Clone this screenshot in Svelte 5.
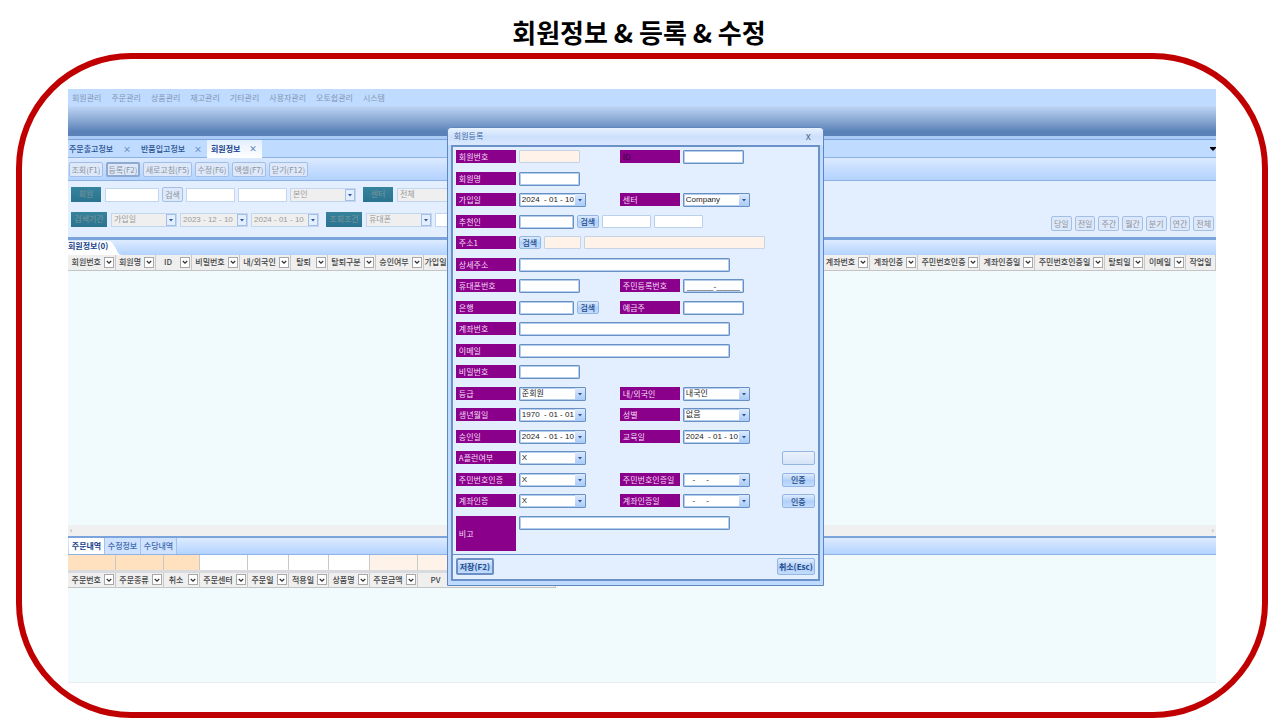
<script>
  const menus = ['회원관리', '주문관리', '상품관리', '재고관리', '기타관리', '사용자관리', '오토쉽관리', '시스템'];
  const tabs = [
    { name: '주문출고정보', active: false },
    { name: '반품입고정보', active: false },
    { name: '회원정보', active: true }
  ];
  const tools = [
    { name: '조회(F1)', w: 34 },
    { name: '등록(F2)', w: 34 },
    { name: '새로고침(F5)', w: 49 },
    { name: '수정(F6)', w: 34 },
    { name: '엑셀(F7)', w: 34 },
    { name: '닫기(F12)', w: 39 }
  ];
  const ranges = ['당일', '전일', '주간', '월간', '분기', '연간', '전체'];
  const memberColumns = [
    { name: '회원번호', w: 47 },
    { name: '회원명', w: 40 },
    { name: 'ID', w: 36 },
    { name: '비밀번호', w: 48 },
    { name: '내/외국인', w: 51 },
    { name: '탈퇴', w: 37 },
    { name: '탈퇴구분', w: 48 },
    { name: '승인여부', w: 48 },
    { name: '가입일', w: 0 },
    { name: '계좌번호', w: 48 },
    { name: '계좌인증', w: 48 },
    { name: '주민번호인증', w: 62 },
    { name: '계좌인증일', w: 55 },
    { name: '주민번호인증일', w: 70 },
    { name: '탈퇴일', w: 40 },
    { name: '이메일', w: 41 },
    { name: '작업일', w: 30, plain: true }
  ];
  const orderColumns = [
    { name: '주문번호', w: 47, tone: 'peach' },
    { name: '주문종류', w: 48, tone: 'peach' },
    { name: '취소', w: 36, tone: 'peach' },
    { name: '주문센터', w: 48, tone: 'white' },
    { name: '주문일', w: 41, tone: 'white' },
    { name: '적용일', w: 40, tone: 'white' },
    { name: '상품명', w: 41, tone: 'white' },
    { name: '주문금액', w: 48, tone: 'cream' },
    { name: 'PV', w: 138, tone: 'cream' }
  ];
  const rows = [
    [{ label: '회원번호', type: 'text', tone: 'off' }, { label: 'ID', type: 'text', dark: true }],
    [{ label: '회원명', type: 'text' }],
    [{ label: '가입일', type: 'date', value: '2024  - 01 - 10' }, { label: '센터', type: 'select', value: 'Company' }],
    [{ label: '추천인', type: 'referrer' }],
    [{ label: '주소1', type: 'address' }],
    [{ label: '상세주소', type: 'wide' }],
    [{ label: '휴대폰번호', type: 'text' }, { label: '주민등록번호', type: 'text', value: '______-_______' }],
    [{ label: '은행', type: 'search' }, { label: '예금주', type: 'text' }],
    [{ label: '계좌번호', type: 'wide' }],
    [{ label: '이메일', type: 'wide' }],
    [{ label: '비밀번호', type: 'text' }],
    [{ label: '등급', type: 'select', value: '준회원' }, { label: '내/외국인', type: 'select', value: '내국인' }],
    [{ label: '생년월일', type: 'date', value: '1970  - 01 - 01' }, { label: '성별', type: 'select', value: '없음' }],
    [{ label: '승인일', type: 'date', value: '2024  - 01 - 10' }, { label: '교육일', type: 'date', value: '2024  - 01 - 10' }],
    [{ label: 'A플런여부', type: 'select', value: 'X' }],
    [{ label: '주민번호인증', type: 'select', value: 'X' }, { label: '주민번호인증일', type: 'date', value: '   -     -' }],
    [{ label: '계좌인증', type: 'select', value: 'X' }, { label: '계좌인증일', type: 'date', value: '   -     -' }],
    [{ label: '비고', type: 'wide' }]
  ];
  const actions = { 14: '', 15: '인증', 16: '인증' };
</script>

{#snippet arrow()}
  <svg class="arrow" viewBox="0 0 6 4" width="6" height="4" aria-hidden="true"><path d="M1 1h4L3 3.4z" /></svg>
{/snippet}

{#snippet filterBox()}
  <button class="drop" aria-label="필터"><svg viewBox="0 0 8 8" width="8" height="8" aria-hidden="true"><path d="M1.800 3l2.200 2.200L6.200 3" /></svg></button>
{/snippet}

{#snippet combo(id, value, label)}
  <span class="combo">
    <select {id} aria-label={label}><option>{value}</option></select>
    <span class="knob">{@render arrow()}</span>
  </span>
{/snippet}

{#snippet datebox(id, value, label)}
  <span class="combo date">
    <input {id} {value} aria-label={label} />
    <button class="knob" aria-label="달력">{@render arrow()}</button>
  </span>
{/snippet}

<main>
  <h1>회원정보 &amp; 등록 &amp; 수정</h1>
  <div class="frame">
    <div class="app">
      <nav class="menu">
        {#each menus as m}<a href="#menu">{m}</a>{/each}
      </nav>
      <div class="banner"></div>
      <div class="tabs">
        {#each tabs as t}
          <div class="tab" class:active={t.active}><span>{t.name}</span><button aria-label="탭 닫기">×</button></div>
        {/each}
        <svg class="more" viewBox="0 0 6 4" width="6" height="4" aria-hidden="true"><path d="M0 0h6v1L3 4 0 1z" /></svg>
      </div>
      <div class="tools">
        {#each tools as t, i}<button class="ghost" class:focus={i === 1} style:width="{t.w}px">{t.name}</button>{/each}
      </div>
      <div class="filters">
        <div class="line">
          <label class="tag short" for="f-member">회원</label>
          <input id="f-member" class="w54" />
          <button class="ghost find">검색</button>
          <input class="w49" aria-label="회원 이름" />
          <input class="w49" aria-label="회원 연락처" />
          {@render combo('f-self', '본인', '관계')}
          <label class="tag short next" for="f-center">센터</label>
          {@render combo('f-center', '전체', '센터')}
        </div>
        <div class="line">
          <label class="tag" for="f-period">검색기간</label>
          {@render combo('f-period', '가입일', '검색기간')}
          {@render datebox('f-from', '2023 - 12 - 10', '시작일')}
          {@render datebox('f-to', '2024 - 01 - 10', '종료일')}
          <label class="tag next" for="f-cond">조회조건</label>
          {@render combo('f-cond', '휴대폰', '조회조건')}
          <input class="w54" aria-label="조회값" />
        </div>
        <div class="ranges">
          {#each ranges as r}<button class="ghost">{r}</button>{/each}
        </div>
      </div>
      <div class="gridtabs">
        <div class="slant">
          <svg viewBox="0 0 54 15" width="54" height="15" aria-hidden="true"><path d="M0 1h40c4 0 5 3 7 6s3 8 7 8H0z" /></svg>
          <strong>회원정보(0)</strong>
        </div>
      </div>
      <table class="member">
        <colgroup>
          {#each memberColumns as c}<col style:width={c.w ? `${c.w}px` : 'auto'} />{/each}
        </colgroup>
        <thead>
          <tr>
            {#each memberColumns as c}
              <th><div class="cell" class:start={!c.w}><span>{c.name}</span>{#if !c.plain}{@render filterBox()}{/if}</div></th>
            {/each}
          </tr>
        </thead>
      </table>
      <div class="empty"></div>
      <div class="scroll"><span>‹</span><span>›</span></div>
      <div class="subtabs">
        <button class="on">주문내역</button><button>수정정보</button><button>수당내역</button>
      </div>
      <div class="orders">
        <table>
          <colgroup>
            {#each orderColumns as c}<col style:width="{c.w}px" />{/each}
          </colgroup>
          <tbody>
            <tr class="sum">{#each orderColumns as c}<td class={c.tone}></td>{/each}</tr>
          </tbody>
          <tbody>
            <tr>
              {#each orderColumns as c}
                <th><div class="cell" class:pv={c.name === 'PV'}><span>{c.name}</span>{#if c.name !== 'PV'}{@render filterBox()}{/if}</div></th>
              {/each}
            </tr>
          </tbody>
        </table>
      </div>

      <div class="dialog" role="dialog" aria-label="회원등록">
        <header><span>회원등록</span><button aria-label="닫기">x</button></header>
        <div class="body">
          <form onsubmit={(e) => e.preventDefault()}>
            {#each rows as row, i}
              <div class="row" class:note={i === 17}>
                {#each row as f, j}
                  {@const id = `m-${i}-${j}`}
                  <label for={id} class:dark={f.dark}>{f.label}</label>
                  <div class="field" class:span={row.length === 1}>
                    {#if f.type === 'date'}
                      {@render datebox(id, f.value, f.label)}
                    {:else if f.type === 'select'}
                      {@render combo(id, f.value, f.label)}
                    {:else if f.type === 'address'}
                      <button class="blue">검색</button>
                      <input {id} class="off w36" />
                      <input class="off w180" aria-label="주소" />
                    {:else if f.type === 'referrer'}
                      <input {id} class="w55" />
                      <button class="blue">검색</button>
                      <input class="pale" aria-label="추천인 번호" />
                      <input class="pale" aria-label="추천인 이름" />
                    {:else if f.type === 'search'}
                      <input {id} class="w55" />
                      <button class="blue">검색</button>
                    {:else}
                      <input {id} class={f.tone ?? ''} class:w211={f.type === 'wide'} value={f.value ?? ''} />
                    {/if}
                    {#if i in actions && j === row.length - 1}
                      <button class="blue auth" class:blank={!actions[i]} aria-label={actions[i] || '여부'}>{actions[i]}</button>
                    {/if}
                  </div>
                {/each}
              </div>
            {/each}
          </form>
          <footer>
            <button class="blue save">저장(F2)</button>
            <button class="blue">취소(Esc)</button>
          </footer>
        </div>
      </div>
    </div>
  </div>
</main>

<style>
  :global(body) { margin: 0; background: #fff; }
  main, main * { box-sizing: border-box; }
  main {
    min-height: 100vh;
    display: flex;
    flex-direction: column;
    padding: 0 12px 2px 16px;
    font-family: 'Noto Sans CJK KR', 'Liberation Sans', sans-serif;
    font-size: 8px;
    line-height: 12px;
    color: #333;
  }
  button, input, select { font: inherit; color: inherit; margin: 0; padding: 0; border: 0; background: none; border-radius: 0; min-width: 0; }
  h1 { margin: 0; height: 53px; padding: 14px 6px 0 0; font-size: 26px; line-height: 36px; text-align: center; color: #000; }
  .frame {
    flex: 1;
    display: flex;
    border: 6px solid #c00000;
    border-radius: 115px;
    padding: 30px 46px 29px;
  }
  .app { position: relative; flex: 1; min-width: 0; display: flex; flex-direction: column; background: #f1fafd; border-bottom: 1px solid #e8eef2; }

  .menu { display: flex; gap: 10px; height: 17px; padding: 3px 4px; background: #bfdbff; }
  .menu a { color: #8296b4; text-decoration: none; }
  .banner { height: 33px; background: linear-gradient(#bfd6f7, #86a5d0 50%, #5a82b9 85%, #5a82b9); border-bottom: 3px solid #a9cbf5; }

  .tabs { display: flex; align-items: center; height: 19px; background: #bfdbff; border-top: 1px solid #7ba4dc; border-bottom: 1px solid #8db2e3; color: #2a528f; font-weight: 500; }
  .tab { display: flex; align-items: center; justify-content: space-between; height: 18px; width: 67px; padding: 0 5px 0 1px; }
  .tab:first-child { width: 72px; padding-right: 9px; }
  .tab button { font-size: 8px; color: #5a7fb5; }
  .tab.active { width: 55px; padding: 0 5px 0 4px; background: linear-gradient(#e4efff, #fff); color: #15428b; font-weight: 700; }
  .more { margin-left: auto; }

  .tools { display: flex; align-items: center; gap: 3px; height: 23px; padding: 0 1px; background: linear-gradient(#dceaff, #c6ddff 50%, #b3d3ff); border-bottom: 1px solid #8db2e3; }
  .ghost { height: 15px; border: 1px solid #a3bfe6; border-radius: 2px; color: #8d9299; background: #dde9fb; white-space: nowrap; line-height: 11px; }
  .ghost.focus { border: 2px solid #8fa9d0; line-height: 9px; }

  .filters { position: relative; display: flex; flex-direction: column; gap: 10px; height: 56px; padding: 6px 3px; background: #e3eeff; color: #9a9a9a; }
  .line { display: flex; align-items: center; gap: 3px; height: 15px; }
  .filters input { height: 14px; border: 1px solid #c3d6f0; background: #fff; }
  .tag { width: 36px; height: 15px; margin-right: 1px; line-height: 14px; text-align: center; color: #7d9598; background: linear-gradient(#35839c, #2b7390); }
  .tag.short { width: 30px; }
  .tag.next { margin-left: 4px; }
  .ghost.find { width: 21px; }
  .w54 { width: 54px; }
  .w49 { width: 49px; }
  .filters .combo { width: 66px; height: 14px; border: 1px solid #c3d6f0; background: #efefef; }
  .filters .combo.date { width: 68px; }
  .filters .combo input { border: 0; background: none; height: 12px; }
  .filters .knob { border: 1px solid #a3bfe6; background: #e3eeff; }
  .ranges { position: absolute; right: 2px; bottom: 6px; width: 163px; display: grid; grid-template-columns: repeat(7, 1fr); gap: 3px; }

  .combo { position: relative; display: flex; width: 67px; height: 14px; }
  .combo select, .combo input { flex: 1; width: 0; height: 12px; line-height: 12px; padding: 0 0 0 2px; appearance: none; outline: 0; border: 0; background: none; font-family: 'Liberation Sans', 'Noto Sans CJK KR', sans-serif; }
  .knob { display: flex; align-items: center; justify-content: center; width: 10px; background: linear-gradient(#dbe9fd, #a9cbf7); pointer-events: none; }
  .arrow path { fill: #2c5596; }

  .gridtabs { display: flex; height: 18px; border-top: 3px solid #7ba4dc; background: linear-gradient(#deebff, #b3d3ff); }
  .slant { position: relative; width: 54px; height: 15px; }
  .slant svg { position: absolute; left: 0; top: 0; }
  .slant path { fill: #fff; }
  .slant strong { position: relative; color: #15428b; white-space: nowrap; line-height: 12px; display: block; }

  table { border-collapse: collapse; table-layout: fixed; width: 100%; }
  th { height: 15px; padding: 0; font-weight: 500; color: #444; background: #efefef; border-right: 1px solid #c9c9c9; border-bottom: 1px solid #c4c4c4; }
  .member { flex: none; }
  .cell { display: flex; align-items: center; justify-content: space-between; height: 14px; padding: 0 1px; white-space: nowrap; line-height: 12px; }
  .cell span { flex: 1; text-align: center; }
  .cell.start span { flex: none; }
  .cell.start { justify-content: flex-start; gap: 3px; }
  .cell.pv { justify-content: flex-start; padding-left: 13px; }
  .cell.pv span { flex: none; }
  .drop { display: flex; width: 10px; height: 11px; border: 1px solid #a8a8a8; background: #fff; align-items: center; justify-content: center; flex: none; }
  .drop svg { flex: none; }
  .drop path { fill: none; stroke: #333; stroke-width: 1.3; }
  .empty { flex: 1; min-height: 240px; }
  .scroll { display: flex; justify-content: space-between; height: 11px; padding: 0 2px; background: #f0f0f0; line-height: 9px; color: #999; }

  .subtabs { display: flex; height: 19px; padding: 0 1px; border-top: 2px solid #7ba4dc; border-bottom: 1px solid #8db2e3; background: linear-gradient(#deebff, #b3d3ff); }
  .subtabs button { width: 36px; height: 16px; color: #3b6aae; border-right: 1px solid #a3c1ec; font-weight: 500; line-height: 12px; background: #cfe2ff; }
  .subtabs .on { background: #fff; color: #15428b; font-weight: 700; }
  .orders { height: 127px; }
  .orders table { width: 487px; }
  .sum td { height: 16px; padding: 0; border-right: 1px solid #c9c9c9; border-bottom: 3px solid #d8dadd; }
  .peach { background: #ffe1c0; }
  .white { background: #fff; }
  .cream { background: #fff3e9; }

  .dialog {
    position: absolute;
    left: 33%;
    top: 38px;
    width: 377px;
    height: 459px;
    display: flex;
    flex-direction: column;
    padding: 0 3px 4px;
    border: 1px solid #5f87bd;
    border-radius: 4px 4px 0 0;
    background: #bfdbff;
  }
  .dialog header { display: flex; justify-content: space-between; height: 17px; margin: 0 -3px; padding: 1px 12px 0 6px; border-radius: 4px 4px 0 0; background: linear-gradient(#e9f2ff, #cde0fb 50%, #d9e8fe); color: #3f68a5; line-height: 14px; }
  .dialog header button { font-size: 10px; font-family: 'Liberation Sans', sans-serif; color: #44648f; }
  .body { flex: 1; display: flex; flex-direction: column; border: 2px solid #6a92c8; background: #e3eeff; }
  form { flex: 1; display: grid; grid-template-rows: repeat(17, 1fr) 35px; padding: 3px 3px 3px; }
  .row { display: grid; grid-template-columns: 60px 98px 60px 1fr; gap: 3px; align-items: start; }
  .row label { height: 13px; line-height: 13px; padding-left: 3px; background: #8b008b; color: #f3dcf3; white-space: nowrap; }
  .row label.dark { color: #2c0030; }
  .row.note label { height: 35px; line-height: 35px; }
  .field { display: flex; gap: 3px; align-items: start; height: 14px; }
  .field.span { grid-column: span 3; }
  .field > input, .field > .combo { flex: none; border: 1px solid #6790c4; border-radius: 1px; background: #fff; color: #222; box-shadow: 0 0 0 1px #b5cdec inset; }
  .field > input { width: 61px; height: 14px; padding: 0 3px; font-family: 'Liberation Sans', sans-serif; }
  .field > input.off { background: #fff3e9; border-color: #c5d3e4; box-shadow: none; height: 13px; }
  .field > input.pale { width: 49px; border-color: #b9cfec; box-shadow: none; height: 13px; }
  .field > input.w55 { width: 55px; }
  .field > input.w36 { width: 37px; }
  .field > input.w180 { width: 181px; }
  .field > input.w211 { width: 211px; }
  .blue { height: 13px; width: 22px; line-height: 11px; border: 1px solid #94b6e2; border-radius: 2px; background: linear-gradient(#deebfe, #b0d0fa 55%, #c4dcff); color: #234a86; font-weight: 500; white-space: nowrap; }
  .blue.auth { width: 33px; height: 14px; margin-left: auto; }
  .blue.blank { background: linear-gradient(#eaf1fc, #d6e4f8); }
  footer { display: flex; justify-content: space-between; height: 25px; padding: 3px 3px 0; border-top: 1px solid #6790c4; }
  footer .blue { width: 38px; height: 17px; line-height: 13px; font-weight: 700; }
  footer .save { border: 2px solid #6b8fc2; line-height: 11px; }
</style>
